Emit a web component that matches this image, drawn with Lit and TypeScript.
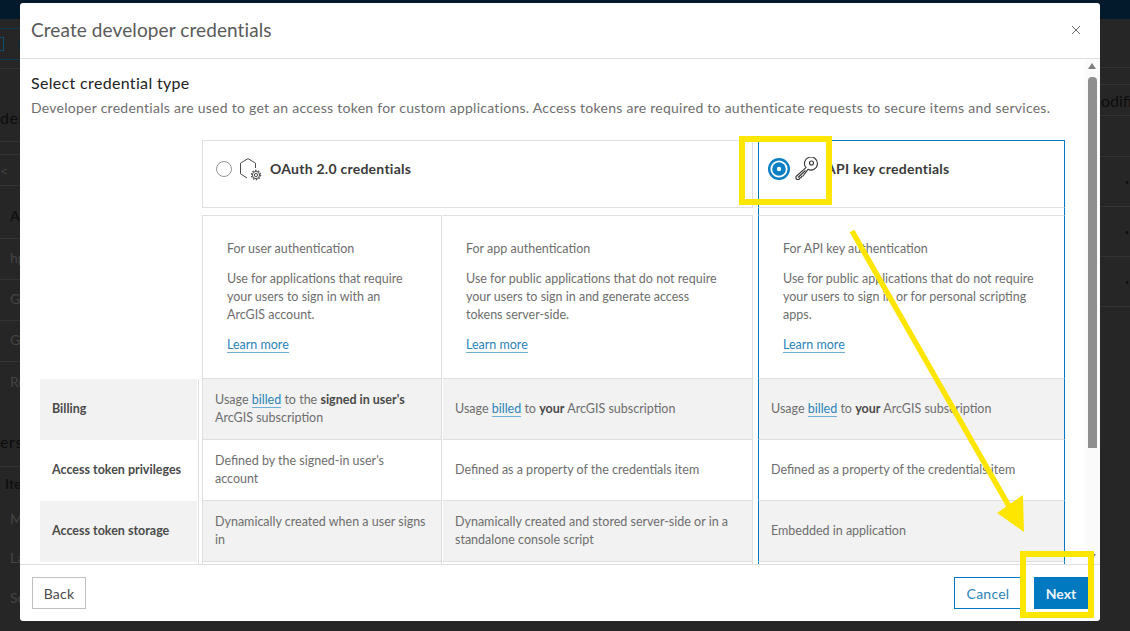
import { LitElement, html, css, svg } from "lit";
import { customElement } from "lit/decorators.js";

interface BackRow { h: number; text?: string; cls?: string; }

const LEFT_ROWS: BackRow[] = [
  { h: 9, cls: "plain" },
  { h: 32, text: "N", cls: "teal" },
  { h: 9 },
  { h: 73, text: "der", cls: "head-txt pad flush" },
  { h: 13 },
  { h: 31, text: "<     I", cls: "flush dim" },
  { h: 53, text: "Al", cls: "bold low" },
  { h: 41, text: "hp", cls: "dim up" },
  { h: 41, text: "Gu", cls: "dim up" },
  { h: 41, text: "Gu", cls: "dim up" },
  { h: 39, text: "Re", cls: "dim plain" },
  { h: 66, text: "ers", cls: "head-txt pad2 flush" },
  { h: 34, text: "Ite", cls: "bold plain near" },
  { h: 38, text: "M", cls: "dim plain up" },
  { h: 40, text: "La", cls: "dim plain up" },
  { h: 40, text: "Sc", cls: "dim plain up" },
];

const RIGHT_ROWS: BackRow[] = [
  { h: 49 },
  { h: 17 },
  { h: 31, text: "odifi", cls: "head-txt flush tight" },
  { h: 41, cls: "" },
  { h: 50, text: "•", cls: "dot" },
  { h: 50, text: "•", cls: "dot" },
  { h: 50, text: "•", cls: "dot" },
];

@customElement("app-root")
export class AppRoot extends LitElement {
  static styles = css`
    :host { display: block; width: 1130px; height: 631px; position: relative; overflow: hidden; background: #262626; font-family: Lato, "Open Sans", sans-serif; color: #6e6e6e; font-size: 13px; }
    .topbar { height: 19px; background: #021a2b; }
    .back { display: flex; justify-content: space-between; color: #111; font-size: 14px; }
    .back-col { width: 30px; display: flex; flex-direction: column; }
    .br { box-sizing: border-box; border-bottom: 1px solid #333; display: flex; align-items: center; white-space: pre; padding-left: 10px; }
    .plain { border-bottom: 0; }
    .teal { border-top: 1px solid #0e3a50; border-bottom: 1px solid #0e3a50; padding-left: 17px; color: #0d2a3a; position: relative; }
    .teal::before { content: ""; position: absolute; left: -4px; top: 8px; width: 6px; height: 12px; border: 1px solid #0e4f75; }
    .pad { padding-top: 24px; }
    .pad2 { padding-top: 16px; }
    .low { padding-top: 6px; }
    .up { padding-bottom: 3px; }
    .flush { padding-left: 0; }
    .near { padding-left: 5px; padding-bottom: 2px; }
    .head-txt { font-size: 16px; color: #0c0c0c; letter-spacing: .6px; }
    .tight { letter-spacing: 0; padding-left: 1px; }
    .dim { color: #444; }
    .bold { font-weight: 700; color: #111; }
    .dot { justify-content: flex-end; padding-right: 1px; font-size: 7px; color: #0c0c0c; }
    .modal { position: absolute; left: 20px; top: 3px; width: 1080px; height: 618px; background: #fff; border-radius: 3px; display: flex; flex-direction: column; overflow: hidden; }
    .head { flex: none; display: flex; align-items: center; justify-content: space-between; padding: 0 19px 2px 11px; border-bottom: 1px solid #dfdfdf; box-sizing: border-box; height: 56px; }
    .title { font-size: 19px; color: #5a5a5a; letter-spacing: .1px; }
    .close { width: 10px; height: 10px; display: block; }
    .body { flex: 1; min-height: 0; overflow: hidden; position: relative; padding: 14px 0 0 11px; }
    h2 { margin: 0; font-size: 16px; line-height: 20px; font-weight: 400; color: #222; letter-spacing: .33px; }
    .desc { margin: 5px 0 0; font-size: 14px; line-height: 20px; color: #6e6e6e; white-space: nowrap; letter-spacing: .26px; }
    .table { margin: 22px 0 0 9px; display: grid; grid-template-columns: 157px 5px 240px 1px 310px 5px 307px; grid-template-rows: 68px 7px 164px 61px 61px 61px 61px; width: 1025px; }
    .cardhead { display: flex; align-items: center; align-self: stretch; padding: 0 0 10px 13px; gap: 7px; font-weight: 700; color: #3a3a3a; font-size: 14px; letter-spacing: .25px; border: 1px solid #dfdfdf; }
    .cardhead > span:last-child { margin-top: -2px; }
    .oauth { grid-column: 3 / 6; grid-row: 1; gap: 8px; }
    .oauth .ic { margin-left: -1px; margin-right: -1px; }
    .api { grid-column: 7; grid-row: 1; border: 1px solid #0079c1; border-bottom-color: #dfdfdf; padding-left: 9px; gap: 31px; }
    .api-ic { display: flex; align-items: center; gap: 5px; margin-right: -24px; }
    .ic { display: block; flex: none; }
    .radio { width: 14px; height: 14px; border: 1px solid #959595; border-radius: 50%; flex: none; background: #fff; }
    .cell { display: flex; align-items: center; padding: 0 12px; line-height: 18px; font-size: 12.5px; color: #6e6e6e; border-bottom: 1px solid #dfdfdf; }
    .gray { background: #f2f2f2; }
    .label { border-bottom: 0; padding-left: 12px; padding-bottom: 2px; font-weight: 700; color: #4a4a4a; font-size: 12.5px; }
    .col1 { grid-column: 3; border-left: 1px solid #dfdfdf; border-right: 1px solid #dfdfdf; }
    .col2 { grid-column: 5; border-right: 1px solid #dfdfdf; }
    .col3 { grid-column: 7; border-left: 1px solid #0079c1; border-right: 1px solid #0079c1; }
    .lab { grid-column: 1; }
    .rule { grid-column: 2; border-right: 1px solid #dfdfdf; margin-right: 3px; }
    .gapline { grid-column: 7; grid-row: 2; border-left: 1px solid #0079c1; border-right: 1px solid #0079c1; }
    .feat { display: block; padding: 24px 24px 0; border-top: 1px solid #dfdfdf; line-height: 18px; }
    .col2.feat { padding-left: 23px; }
    .feat p { margin: 0 0 12px; }
    a { color: #2b83b8; text-decoration: none; border-bottom: 1px solid #6fb0d6; }
    b { color: #4a4a4a; font-weight: 700; }
    .scroll { position: absolute; right: 0; top: 0; bottom: 0; width: 15px; background: #fafafa; }
    .thumb { position: absolute; left: 3px; width: 9px; top: 18px; height: 371px; background: #8f8f8f; border-radius: 4px 4px 0 0; }
    .up-arrow { position: absolute; left: 3px; top: 4px; width: 0; height: 0; border: 4.5px solid transparent; border-bottom: 6px solid #7f7f7f; border-top: 0; }
    .down-arrow { position: absolute; left: 3px; bottom: 4px; width: 0; height: 0; border: 4.5px solid transparent; border-top: 6px solid #7f7f7f; border-bottom: 0; }
    .foot { height: 57px; flex: none; border-top: 1px solid #dfdfdf; display: flex; align-items: center; justify-content: space-between; padding: 0 12px; box-sizing: border-box; }
    .btn { height: 32px; box-sizing: border-box; display: flex; align-items: center; justify-content: center; font-size: 14px; letter-spacing: .25px; background: #fff; }
    .b-back { width: 54px; border: 1px solid #bfbfbf; color: #4a4a4a; }
    .right { display: flex; gap: 12px; }
    .b-cancel { width: 68px; border: 1px solid #0079c1; color: #2b83b8; }
    .b-next { width: 54px; background: #0079c1; color: #e9f3fa; font-weight: 700; letter-spacing: 0; }
    .anno { position: absolute; inset: 0; width: 1130px; height: 631px; pointer-events: none; }
  `;

  private hex() {
    return svg`<svg class="ic" width="24" height="24" viewBox="0 0 24 24" fill="none" stroke="#4a4a4a" stroke-width="1" stroke-linejoin="round">
      <path d="M16.5 11V6.2L9 1.6 1.5 6.2v10.6L8 21"/>
      <g transform="translate(17 18)" stroke-width="1"><circle r="1.6"/><circle r="3.6"/><circle r="4.6" stroke-width="1.3" stroke-dasharray="1.45 1.44"/></g>
    </svg>`;
  }

  private key() {
    return svg`<svg class="ic" width="24" height="24" viewBox="0 0 24 24" fill="none" stroke="#333" stroke-width="1.1" stroke-linejoin="round">
      <path d="M11 10.7 1 19.5v2l1 1h2l.8-1.6 1.4-.2.4-1.4 1.4-.3L13 12.3A6.5 6.5 0 1 0 11 10.7z"/>
      <circle cx="16.5" cy="6" r="2"/>
      <path d="M3 20.5l7.5-7"/>
    </svg>`;
  }

  private radioOn() {
    return svg`<svg class="ic" width="22" height="22" viewBox="0 0 22 22">
      <circle cx="11" cy="11" r="11" fill="#0a7fc4"/>
      <circle cx="11" cy="11" r="8.6" fill="#fff"/>
      <circle cx="11" cy="11" r="6.8" fill="#0a7fc4"/>
      <circle cx="11" cy="11" r="2.2" fill="#fff"/>
    </svg>`;
  }

  private anno() {
    return svg`<svg class="anno" viewBox="0 0 1130 631">
      <g fill="none" stroke="#ffe600" stroke-width="6">
        <rect x="742" y="139" width="87" height="63"/>
        <rect x="1023" y="554" width="68" height="61"/>
      </g>
      <path d="M852 231 1010 508" stroke="#ffe600" stroke-width="5.5" fill="none"/>
      <path d="M997 513 1023 495 1024 532z" fill="#ffe600"/>
    </svg>`;
  }

  private backRow(r: BackRow) {
    return html`<div class="br ${r.cls ?? ""}" style="height:${r.h}px">${r.text ?? ""}</div>`;
  }

  render() {
    return html`
      <div class="topbar"></div>
      <div class="back">
        <div class="back-col">${LEFT_ROWS.map((r) => this.backRow(r))}</div>
        <div class="back-col">${RIGHT_ROWS.map((r) => this.backRow(r))}</div>
      </div>

      <div class="modal">
        <div class="head">
          <div class="title">Create developer credentials</div>
          <svg class="close" viewBox="0 0 10 10" stroke="#6a6a6a" stroke-width="1"><path d="M1 1l8 8M9 1l-8 8"/></svg>
        </div>
        <div class="body">
          <h2>Select credential type</h2>
          <p class="desc">Developer credentials are used to get an access token for custom applications. Access tokens are required to authenticate requests to secure items and services.</p>
          <div class="table">
            <div class="cardhead oauth"><span class="radio"></span>${this.hex()}<span>OAuth 2.0 credentials</span></div>
            <div class="cardhead api"><span class="api-ic">${this.radioOn()}${this.key()}</span><span>API key credentials</span></div>
            <div class="gapline"></div>

            <div class="col1 cell feat" style="grid-row:3"><p>For user authentication</p><p>Use for applications that require your users to sign in with an ArcGIS account.</p><a>Learn more</a></div>
            <div class="col2 cell feat" style="grid-row:3"><p>For app authentication</p><p>Use for public applications that do not require your users to sign in and generate access tokens server-side.</p><a>Learn more</a></div>
            <div class="col3 cell feat" style="grid-row:3"><p>For API key authentication</p><p>Use for public applications that do not require your users to sign in or for personal scripting apps.</p><a>Learn more</a></div>

            <div class="lab cell label gray" style="grid-row:4">Billing</div>
            <div class="rule" style="grid-row:4"></div>
            <div class="col1 cell gray" style="grid-row:4"><span>Usage <a>billed</a> to the <b>signed in user's</b> ArcGIS subscription</span></div>
            <div class="col2 cell gray" style="grid-row:4"><span>Usage <a>billed</a> to <b>your</b> ArcGIS subscription</span></div>
            <div class="col3 cell gray" style="grid-row:4"><span>Usage <a>billed</a> to <b>your</b> ArcGIS subscription</span></div>

            <div class="lab cell label" style="grid-row:5">Access token privileges</div>
            <div class="rule" style="grid-row:5"></div>
            <div class="col1 cell" style="grid-row:5">Defined by the signed-in user's account</div>
            <div class="col2 cell" style="grid-row:5">Defined as a property of the credentials item</div>
            <div class="col3 cell" style="grid-row:5">Defined as a property of the credentials item</div>

            <div class="lab cell label gray" style="grid-row:6">Access token storage</div>
            <div class="rule" style="grid-row:6"></div>
            <div class="col1 cell gray" style="grid-row:6">Dynamically created when a user signs in</div>
            <div class="col2 cell gray" style="grid-row:6">Dynamically created and stored server-side or in a standalone console script</div>
            <div class="col3 cell gray" style="grid-row:6">Embedded in application</div>

            <div class="rule" style="grid-row:7"></div>
            <div class="col1 cell" style="grid-row:7"></div>
            <div class="col2 cell" style="grid-row:7"></div>
            <div class="col3 cell" style="grid-row:7"></div>
          </div>
          <div class="scroll"><div class="up-arrow"></div><div class="thumb"></div><div class="down-arrow"></div></div>
        </div>
        <div class="foot">
          <div class="btn b-back">Back</div>
          <div class="right">
            <div class="btn b-cancel">Cancel</div>
            <div class="btn b-next">Next</div>
          </div>
        </div>
      </div>
      ${this.anno()}
    `;
  }
}
